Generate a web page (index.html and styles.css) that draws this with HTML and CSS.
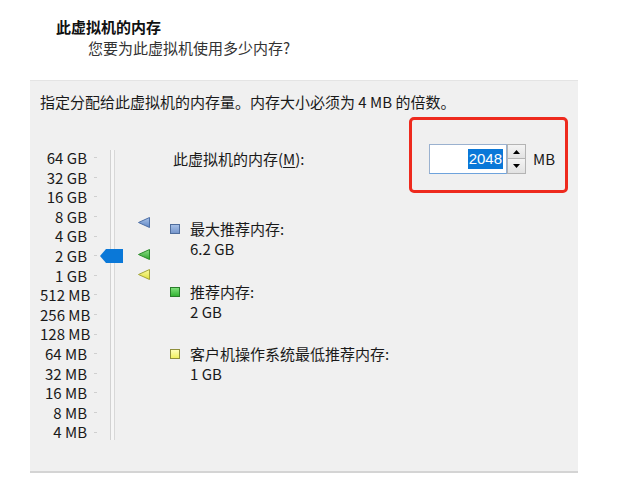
FILE: index.html
```html
<!DOCTYPE html>
<html lang="zh-CN">
<head>
<meta charset="utf-8">
<title>内存</title>
<link rel="stylesheet" href="styles.css">
</head>
<body>
<div class="header">
  <div class="title">此虚拟机的内存</div>
  <div class="subtitle">您要为此虚拟机使用多少内存?</div>
</div>
<div class="panel">
  <div class="intro">指定分配给此虚拟机的内存量。内存大小必须为 4 MB 的倍数。</div>
  <div class="body">
    <div class="slider">
      <div class="labels">
        <div>64 GB</div><div>32 GB</div><div>16 GB</div><div>8 GB</div><div>4 GB</div>
        <div>2 GB</div><div>1 GB</div><div>512 MB</div><div>256 MB</div><div>128 MB</div>
        <div>64 MB</div><div>32 MB</div><div>16 MB</div><div>8 MB</div><div>4 MB</div>
      </div>
      <div class="ticks">
        <i></i><i></i><i></i><i></i><i></i><i></i><i></i><i></i><i></i><i></i><i></i><i></i><i></i><i></i><i></i>
      </div>
      <div class="track"></div>
      <svg class="thumb" width="23" height="14" viewBox="0 0 23 14"><polygon points="0,7 6,0 23,0 23,14 6,14" fill="#0a78d8"/></svg>
      <svg class="mark mark-max" width="12" height="11" viewBox="0 0 12 11"><defs><linearGradient id="gb" x1="0" y1="0" x2="0" y2="1"><stop offset="0" stop-color="#a9c3ea"/><stop offset="1" stop-color="#5f86c4"/></linearGradient></defs><polygon points="0.5,5.5 11.5,0.5 11.5,10.5" fill="url(#gb)" stroke="#4d6fa6" stroke-width="1" stroke-linejoin="round"/></svg>
      <svg class="mark mark-rec" width="12" height="11" viewBox="0 0 12 11"><defs><linearGradient id="gg" x1="0" y1="0" x2="0" y2="1"><stop offset="0" stop-color="#8fe08a"/><stop offset="1" stop-color="#2ea52e"/></linearGradient></defs><polygon points="0.5,5.5 11.5,0.5 11.5,10.5" fill="url(#gg)" stroke="#2a8a2a" stroke-width="1" stroke-linejoin="round"/></svg>
      <svg class="mark mark-min" width="12" height="11" viewBox="0 0 12 11"><defs><linearGradient id="gy" x1="0" y1="0" x2="0" y2="1"><stop offset="0" stop-color="#fbfba0"/><stop offset="1" stop-color="#e0e03a"/></linearGradient></defs><polygon points="0.5,5.5 11.5,0.5 11.5,10.5" fill="url(#gy)" stroke="#a3a33a" stroke-width="1" stroke-linejoin="round"/></svg>
    </div>
    <div class="right">
      <div class="spin-row">
        <div class="spin-label">此虚拟机的内存(<u>M</u>):</div>
        <div class="spin">
          <div class="spin-input"><span class="sel">2048</span></div>
          <div class="spin-btns">
            <div class="spin-btn"><svg width="7" height="4" viewBox="0 0 7 4"><polygon points="0,4 3.5,0 7,4" fill="#000"/></svg></div>
            <div class="spin-btn"><svg width="7" height="4" viewBox="0 0 7 4"><polygon points="0,0 7,0 3.5,4" fill="#000"/></svg></div>
          </div>
        </div>
        <div class="unit">MB</div>
      </div>
      <div class="legend">
        <div class="item">
          <span class="sq sq-blue"></span>
          <div class="txt"><div>最大推荐内存:</div><div>6.2 GB</div></div>
        </div>
        <div class="item">
          <span class="sq sq-green"></span>
          <div class="txt"><div>推荐内存:</div><div>2 GB</div></div>
        </div>
        <div class="item">
          <span class="sq sq-yellow"></span>
          <div class="txt"><div>客户机操作系统最低推荐内存:</div><div>1 GB</div></div>
        </div>
      </div>
    </div>
  </div>
  <div class="highlight"></div>
</div>
</body>
</html>
```
FILE: styles.css
```css
* { box-sizing: border-box; }
html, body { margin: 0; padding: 0; background: #ffffff; }
body {
  font-family: "Noto Sans CJK SC", "Liberation Sans", sans-serif;
  font-size: 15px;
  color: #1a1a1a;
  width: 618px;
  height: 483px;
  overflow: hidden;
}
.header { padding: 18px 0 0 56px; }
.title { font-weight: bold; line-height: 18px; color: #111; }
.subtitle { margin-top: 3px; padding-left: 32px; line-height: 18px; color: #333; }

.panel {
  position: relative;
  margin: 23px 0 0 30px;
  width: 548px;
  height: 393px;
  background: #f0f0f0;
  border-top: 1px solid #e4e4e4;
  border-bottom: 2px solid #d4d4d4;
}
.intro { padding: 12px 0 0 10px; line-height: 18px; }

.body { display: flex; margin-top: 33px; padding-left: 10px; }
.slider { position: relative; display: flex; margin-top: 4px; }
.labels { width: 47px; text-align: right; }
.labels div { height: 19.6px; line-height: 19.6px; white-space: nowrap; }
.ticks { display: flex; flex-direction: column; margin-left: 7px; width: 3px; }
.ticks i { display: flex; height: 19.6px; align-items: center; }
.ticks i::before { content: ""; display: block; width: 3px; height: 1px; background: #cfcfcf; }
.track {
  margin-left: 13px;
  margin-top: 2px;
  width: 5px;
  height: 290px;
  border-left: 1px solid #d2d2d2;
  border-right: 1px solid #d8d8d8;
  background: #f6f6f6;
}
.thumb { position: absolute; left: 60px; top: 101px; }
.mark { position: absolute; left: 98px; }
.mark-max { top: 69px; }
.mark-rec { top: 101px; }
.mark-min { top: 121px; }

.right { margin-left: 55px; }
.spin-row { display: flex; align-items: center; height: 30px; }
.spin-label { width: 259px; padding-left: 3px; line-height: 20px; white-space: nowrap; }
.spin-label u { text-underline-offset: 2px; }
.spin { display: flex; height: 30px; }
.spin-input {
  width: 78px;
  height: 30px;
  background: #fff;
  border: 1px solid #9ab1cf;
  border-bottom-color: #6ea3dc;
  display: flex;
  align-items: center;
  justify-content: flex-end;
  padding-right: 3px;
}
.sel {
  background: #0a78d8;
  color: #fff;
  line-height: 20px;
  padding: 0 1px;
  font-family: "Liberation Sans", sans-serif;
  font-size: 15px;
}
.spin-btns { display: flex; flex-direction: column; width: 19px; }
.spin-btn {
  height: 15px;
  border: 1px solid #b4b4b4;
  background: linear-gradient(#f4f4f4, #e2e2e2);
  display: flex;
  align-items: center;
  justify-content: center;
}
.spin-btn + .spin-btn { border-top: none; }
.unit { margin-left: 7px; line-height: 20px; }

.legend { margin-top: 45px; display: flex; flex-direction: column; gap: 22.5px; }
.item { display: flex; }
.sq { width: 10px; height: 10px; margin-top: 5px; margin-right: 10px; border: 1px solid; flex: none; }
.sq-blue { background: linear-gradient(#a5bfe6, #7696cc); border-color: #4f6d9c; }
.sq-green { background: linear-gradient(#7fe07a, #34b334); border-color: #2a7d2a; }
.sq-yellow { background: linear-gradient(#fdfdb8, #f0f060); border-color: #8f8f3c; }
.txt div { line-height: 20px; white-space: nowrap; }

.highlight {
  position: absolute;
  left: 379px;
  top: 36px;
  width: 159px;
  height: 76px;
  border: 3px solid #ee2a1e;
  border-radius: 5px;
}
```
